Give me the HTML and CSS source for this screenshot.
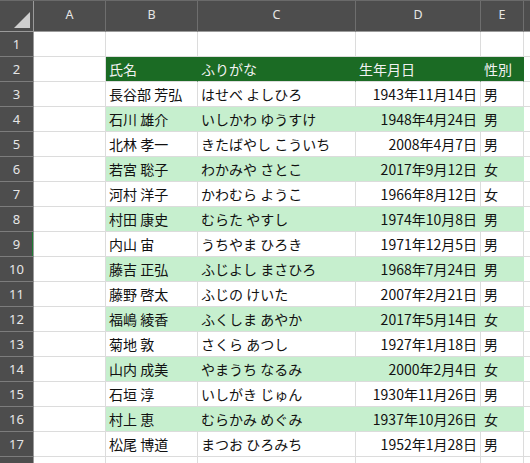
FILE: index.html
```html
<!DOCTYPE html>
<html lang="ja">
<head>
    <meta charset="UTF-8">
    <meta name="viewport" content="width=device-width, initial-scale=1.0">
    <title>名簿</title>
    <link rel="stylesheet" href="styles.css">
</head>
<body>
<section class="sheet">
    <div class="row colhead">
        <div class="corner">
            <svg width="16" height="16" viewBox="0 0 16 16"><polygon points="16,0 16,16 0,16" fill="#cfcfcf"/></svg>
        </div>
        <div>A</div><div>B</div><div>C</div><div>D</div><div>E</div><div></div>
    </div>
    <div class="row"><div class="num">1</div><div></div><div></div><div></div><div></div><div></div><div></div></div>
    <div class="row head"><div class="num">2</div><div></div><div class="f">氏名</div><div class="f">ふりがな</div><div class="f">生年月日</div><div class="f">性別</div><div></div></div>
    <div class="row"><div class="num">3</div><div></div><div>長谷部 芳弘</div><div>はせべ よしひろ</div><div class="date">1943年11月14日</div><div>男</div><div></div></div>
    <div class="row band"><div class="num">4</div><div></div><div class="f">石川 雄介</div><div class="f">いしかわ ゆうすけ</div><div class="f date">1948年4月24日</div><div class="f">男</div><div></div></div>
    <div class="row"><div class="num">5</div><div></div><div>北林 孝一</div><div>きたばやし こういち</div><div class="date">2008年4月7日</div><div>男</div><div></div></div>
    <div class="row band"><div class="num">6</div><div></div><div class="f">若宮 聡子</div><div class="f">わかみや さとこ</div><div class="f date">2017年9月12日</div><div class="f">女</div><div></div></div>
    <div class="row"><div class="num">7</div><div></div><div>河村 洋子</div><div>かわむら ようこ</div><div class="date">1966年8月12日</div><div>女</div><div></div></div>
    <div class="row band"><div class="num">8</div><div></div><div class="f">村田 康史</div><div class="f">むらた やすし</div><div class="f date">1974年10月8日</div><div class="f">男</div><div></div></div>
    <div class="row"><div class="num active">9</div><div></div><div>内山 宙</div><div>うちやま ひろき</div><div class="date">1971年12月5日</div><div>男</div><div></div></div>
    <div class="row band"><div class="num">10</div><div></div><div class="f">藤吉 正弘</div><div class="f">ふじよし まさひろ</div><div class="f date">1968年7月24日</div><div class="f">男</div><div></div></div>
    <div class="row"><div class="num">11</div><div></div><div>藤野 啓太</div><div>ふじの けいた</div><div class="date">2007年2月21日</div><div>男</div><div></div></div>
    <div class="row band"><div class="num">12</div><div></div><div class="f">福嶋 綾香</div><div class="f">ふくしま あやか</div><div class="f date">2017年5月14日</div><div class="f">女</div><div></div></div>
    <div class="row"><div class="num">13</div><div></div><div>菊地 敦</div><div>さくら あつし</div><div class="date">1927年1月18日</div><div>男</div><div></div></div>
    <div class="row band"><div class="num">14</div><div></div><div class="f">山内 成美</div><div class="f">やまうち なるみ</div><div class="f date">2000年2月4日</div><div class="f">女</div><div></div></div>
    <div class="row"><div class="num">15</div><div></div><div>石垣 淳</div><div>いしがき じゅん</div><div class="date">1930年11月26日</div><div>男</div><div></div></div>
    <div class="row band"><div class="num">16</div><div></div><div class="f">村上 恵</div><div class="f">むらかみ めぐみ</div><div class="f date">1937年10月26日</div><div class="f">女</div><div></div></div>
    <div class="row"><div class="num">17</div><div></div><div>松尾 博道</div><div>まつお ひろみち</div><div class="date">1952年1月28日</div><div>男</div><div></div></div>
    <div class="row"><div class="num"></div><div></div><div></div><div></div><div></div><div></div><div></div></div>
</section>
</body>
</html>
```

FILE: styles.css
```css
*{
    margin: 0;
    padding: 0;
    box-sizing: border-box;
}
html, body{
    width: 530px;
    height: 463px;
    overflow: hidden;
    background: #ffffff;
}
body{
    font-family: "Noto Sans CJK JP", "Noto Sans", sans-serif;
    font-size: 14px;
    color: #111111;
}
.sheet{
    border-top: 1px solid #6a6a6a;
}
.row{
    display: grid;
    grid-template-columns: 34px 72px 92px 158px 125px 43px 1fr;
    height: 25px;
}
.row > div{
    border-right: 1px solid #dcdcdc;
    border-bottom: 1px solid #dcdcdc;
    display: flex;
    align-items: center;
    padding: 0 3px;
    white-space: nowrap;
    overflow: hidden;
}
.colhead{
    height: 31px;
    background: #4d4d4d;
}
.colhead > div{
    justify-content: center;
    color: #e6e6e6;
    font-family: "Noto Sans", sans-serif;
    font-size: 12.5px;
    padding-bottom: 3px;
    border-right: 1px solid #6e6e6e;
    border-bottom: 1px solid #9a9a9a;
}
.colhead .corner{
    align-items: flex-end;
    justify-content: flex-end;
    padding: 0 3px 3px 0;
    border-right: 1px solid #9a9a9a;
}
.row > .num{
    background: #4d4d4d;
    color: #e6e6e6;
    font-family: "Noto Sans", sans-serif;
    font-size: 13px;
    justify-content: center;
    border-right: 1px solid #9a9a9a;
    border-bottom: 1px solid #7c7c7c;
    position: relative;
}
.num.active::after{
    content: "";
    position: absolute;
    right: -1px;
    top: 0;
    bottom: -1px;
    width: 2px;
    background: #1e7b34;
}
.head > .f{
    background: #1b6b24;
    border-right-color: #1b6b24;
    color: #f2f2f2;
}
.band > .f{
    background: #c6efce;
    border-right-color: #c6efce;
}
.date{
    justify-content: flex-end;
}
```
